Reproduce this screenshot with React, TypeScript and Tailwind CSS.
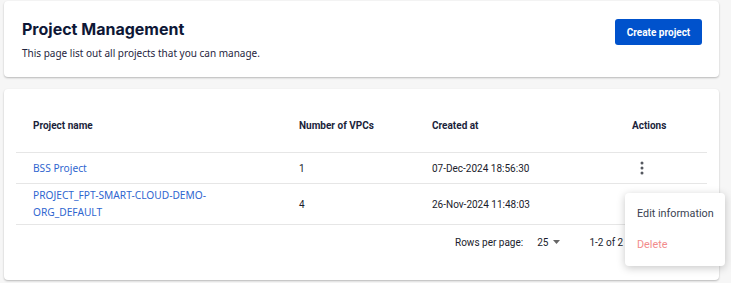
export default function App() {
  const rows = [
    { name: "BSS Project", vpcs: "1", created: "07-Dec-2024 18:56:30", kebab: true },
    { name: "PROJECT_FPT-SMART-CLOUD-DEMO-ORG_DEFAULT", vpcs: "4", created: "26-Nov-2024 11:48:03", kebab: false },
  ];

  const cols = "grid grid-cols-[266px_133px_200px_93px]";

  return (
    <div className="relative min-h-[283px] bg-[#f6f6f6] pl-1 pr-3 pt-px font-['Roboto',sans-serif]">
      {/* header card */}
      <div className="flex h-[76px] items-start justify-between rounded bg-white pl-[18px] pr-[17px] pt-[17px] shadow-[0_1px_2px_rgba(0,0,0,0.25)]">
        <div>
          <h1 className="font-['Inter',sans-serif] text-[16px] font-bold leading-[22px] text-[#0e1736]">Project Management</h1>
          <p className="mt-[6px] font-['Noto_Sans',sans-serif] text-[10px] leading-[14px] text-[#1f2540]">
            This page list out all projects that you can manage.
          </p>
        </div>
        <button type="button" className="mt-px h-[26px] w-[87px] rounded-[3px] bg-[#0052cc] text-[10px] font-bold text-white">
          Create project
        </button>
      </div>

      {/* table card */}
      <div className="mt-3 h-[191px] rounded bg-white px-3 pt-[10px] shadow-[0_1px_2px_rgba(0,0,0,0.25)]">
        <div className={`${cols} h-[54px] items-center border-b border-[#e6e6e6] text-[10px] font-bold text-[#1b1f3b]`}>
          <div className="pl-[17px]">Project name</div>
          <div className="pl-[17px]">Number of VPCs</div>
          <div className="pl-[17px]">Created at</div>
          <div className="pl-[17px]">Actions</div>
        </div>
        {rows.map((r) => (
          <div key={r.name} className={`${cols} min-h-[31px] items-center border-b border-[#e6e6e6] py-[3px] text-[10px] text-[#1a1c2c]`}>
            <div className="pl-[17px] pr-[60px] font-['Noto_Sans',sans-serif] text-[10.2px] leading-[17px] text-[#2f66cf]">{r.name}</div>
            <div className="pl-[17px]">{r.vpcs}</div>
            <div className="pl-[17px]">{r.created}</div>
            <div className="pl-[15px]">
              {r.kebab && (
                <svg width="24" height="18" viewBox="0 0 24 18" className="block">
                  <circle cx="12" cy="4" r="1.5" fill="#55585f" />
                  <circle cx="12" cy="9" r="1.5" fill="#55585f" />
                  <circle cx="12" cy="14" r="1.5" fill="#55585f" />
                </svg>
              )}
            </div>
          </div>
        ))}
        <div className="flex h-[34px] items-center pl-[439px] text-[10px] text-[#1a1c2c]">
          <span>Rows per page:</span>
          <span className="ml-[14px]">25</span>
          <svg width="7" height="4" viewBox="0 0 7 4" className="ml-[5px]">
            <path d="M0 0 L7 0 L3.5 4 Z" fill="#666" />
          </svg>
          <span className="ml-[29px]">1-2 of 2</span>
        </div>
      </div>

      {/* actions menu */}
      <div className="absolute left-[625px] top-[193px] flex h-[73px] w-[100px] flex-col justify-center gap-[13px] rounded bg-white pl-3 text-[10.8px] shadow-[0_2px_8px_rgba(0,0,0,0.22)]">
        <div className="leading-[18px] text-[#3a3f51]">Edit information</div>
        <div className="leading-[18px] text-[#f28b8b]">Delete</div>
      </div>
    </div>
  );
}
